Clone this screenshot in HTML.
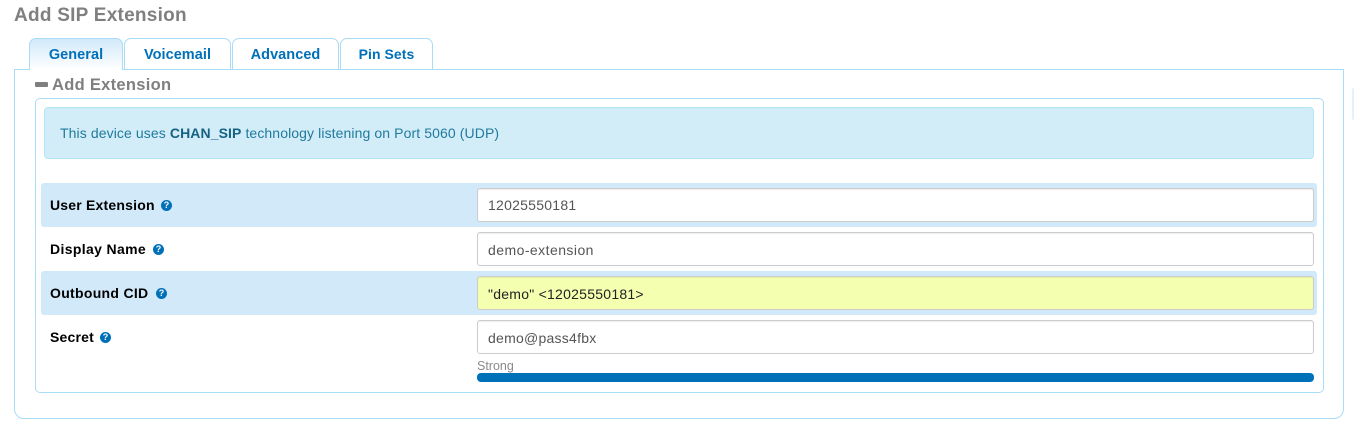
<!DOCTYPE html>
<html><head><meta charset="utf-8"><style>
html,body{margin:0;padding:0;background:#fff;width:1354px;height:425px;overflow:hidden}
body{position:relative;font-family:"Liberation Sans",sans-serif;color:#000}
div,span.a{position:absolute;box-sizing:border-box}
.t{white-space:nowrap;line-height:20px}
.tab{top:38px;height:32px;border:1px solid #a9dcf7;border-bottom:0;border-radius:7px 7px 0 0;background:#fff;color:#0070b9;font-weight:bold;font-size:14.5px;text-align:center;line-height:32px;letter-spacing:.05px}
.row{left:41px;width:1276px;height:44px;background:#d2e9fa;border-radius:3px}
.in{left:477px;width:837px;height:34px;border:1px solid #ccc;border-radius:3px;background:#fff;font-size:14px;line-height:32px;padding-left:10px;color:#555;box-shadow:inset 0 1px 1px rgba(0,0,0,.07);letter-spacing:.25px}
.lb{left:50px;font-size:14px;font-weight:bold;letter-spacing:.2px}
.q{width:11px;height:11px;border-radius:50%;background:#0070b9;color:#fff;font-size:9px;font-weight:bold;line-height:11px;text-align:center}
</style></head><body>
<div class="t" style="left:14px;top:6px;font-size:19px;font-weight:bold;color:#7f7f7f;letter-spacing:.25px">Add SIP Extension</div>

<div style="left:14px;top:69px;width:1330px;height:350px;border:1px solid #a9dcf7;border-radius:0 0 10px 10px"></div>
<div class="tab" style="left:29px;width:94px;background:linear-gradient(#d2e9fa,#fff);">General</div>
<div class="tab" style="left:124px;width:107px;border-bottom:1px solid #a9dcf7">Voicemail</div>
<div class="tab" style="left:232px;width:107px;border-bottom:1px solid #a9dcf7">Advanced</div>
<div class="tab" style="left:340px;width:93px;border-bottom:1px solid #a9dcf7;font-size:14px;line-height:31px">Pin Sets</div>

<div style="left:35px;top:82px;width:13px;height:5px;background:#7f7f7f;border-radius:1px"></div>
<div class="t" style="left:52px;top:75px;font-size:16.5px;font-weight:bold;color:#7f7f7f;letter-spacing:.3px">Add Extension</div>

<div style="left:35px;top:98px;width:1289px;height:295px;border:1px solid #a9dcf7;border-radius:5px"></div>
<div style="left:44px;top:107px;width:1270px;height:52px;background:#d3edf8;border:1px solid #b3e6f4;border-radius:4px"></div>
<div class="t" style="left:60px;top:123px;font-size:14px;color:#1f7a9e;letter-spacing:.1px">This device uses <b style="color:#156283">CHAN_SIP</b> technology listening on Port 5060 (UDP)</div>

<div class="row" style="top:183px"></div>
<div class="row" style="top:271px"></div>

<div class="t lb" style="top:195px">User Extension</div>
<div class="q" style="left:161px;top:200px">?</div>
<div class="t lb" style="top:239px;letter-spacing:.35px">Display Name</div>
<div class="q" style="left:153px;top:244px">?</div>
<div class="t lb" style="top:283px;letter-spacing:.3px">Outbound CID</div>
<div class="q" style="left:156px;top:288px">?</div>
<div class="t lb" style="top:327px">Secret</div>
<div class="q" style="left:100px;top:332px">?</div>

<div class="in" style="top:188px">12025550181</div>
<div class="in" style="top:232px;line-height:34px;letter-spacing:.45px">demo-extension</div>
<div class="in" style="top:276px;line-height:34px;background:#f5ffb0;color:#222">"demo" &lt;12025550181&gt;</div>
<div class="in" style="top:320px;line-height:34px">demo@pass4fbx</div>

<div class="t" style="left:477px;top:356px;font-size:12.5px;color:#8a8a8a">Strong</div>
<div style="left:477px;top:373px;width:837px;height:9px;background:#0070b9;border-radius:4px"></div>

<div style="left:1352px;top:88px;width:2px;height:32px;background:#e3f1fa;border-radius:3px 0 0 3px"></div>
</body></html>
